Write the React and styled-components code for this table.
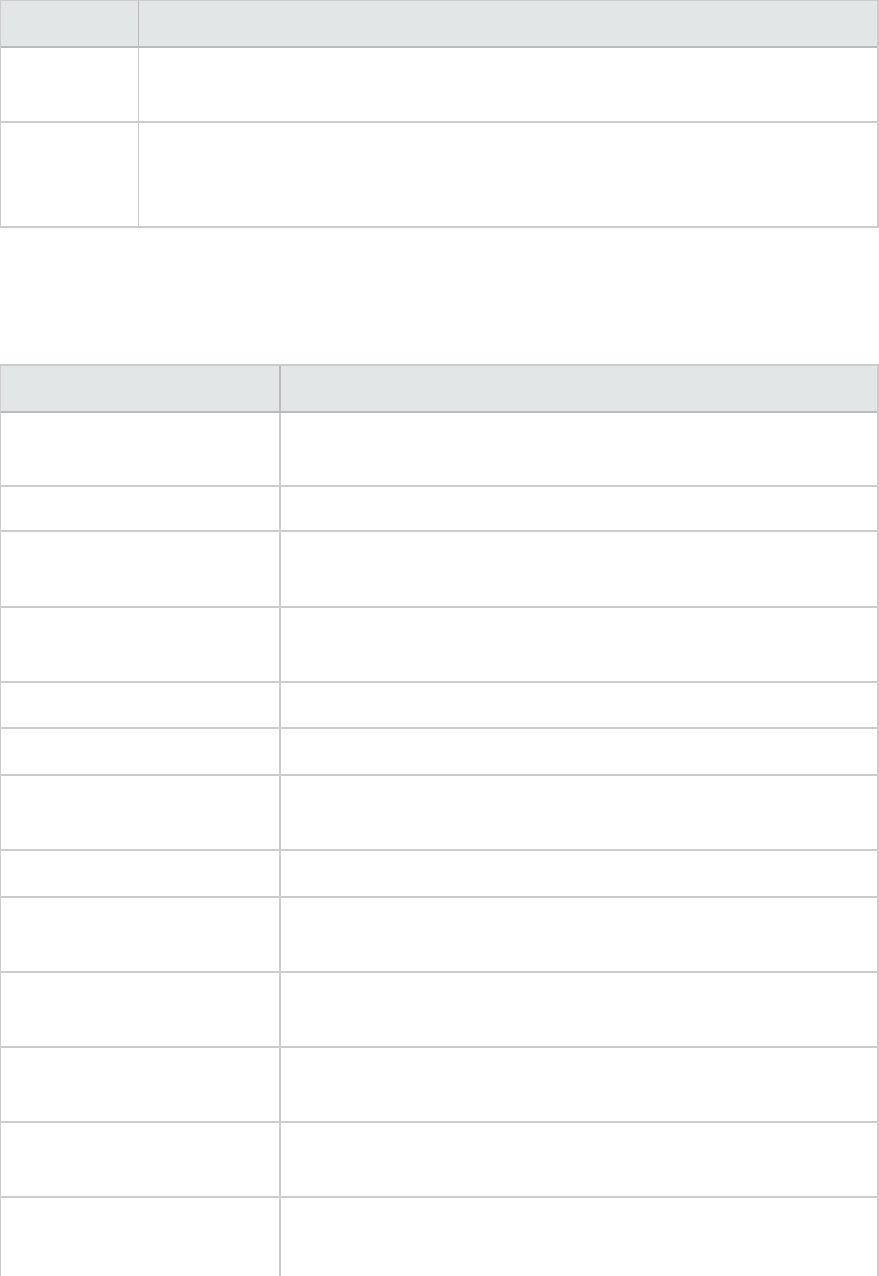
import React from 'react';
import styled, { createGlobalStyle } from 'styled-components';

const GlobalStyle = createGlobalStyle`
    body {
        margin: 0;
        background: #fff;
        font-family: "Liberation Sans", Arial, sans-serif;
        font-size: 14px;
        color: #333;
    }
`;

const smallRows = [73, 103];
const bigRows = [72, 43, 74, 73, 44, 45, 73, 45, 73, 73, 73, 73, 90];

function App() {
    return (
        <Page>
            <GlobalStyle />
            <Table $topBorder={1}>
                <colgroup>
                    <col style={{ width: 138 }} />
                    <col />
                </colgroup>
                <thead>
                    <tr>
                        <HeadCell $h={45} $divider={1}></HeadCell>
                        <HeadCell $h={45}></HeadCell>
                    </tr>
                </thead>
                <tbody>
                    {smallRows.map((h, i) => (
                        <tr key={i}>
                            <Cell $h={h} $divider={1}></Cell>
                            <Cell $h={h}></Cell>
                        </tr>
                    ))}
                </tbody>
            </Table>

            <Table $topBorder={2}>
                <colgroup>
                    <col style={{ width: 280 }} />
                    <col />
                </colgroup>
                <thead>
                    <tr>
                        <HeadCell $h={45} $divider={2}></HeadCell>
                        <HeadCell $h={45}></HeadCell>
                    </tr>
                </thead>
                <tbody>
                    {bigRows.map((h, i) => (
                        <tr key={i}>
                            <Cell $h={h} $divider={2}></Cell>
                            <Cell $h={h}></Cell>
                        </tr>
                    ))}
                </tbody>
            </Table>
        </Page>
    );
}

export default App;

const Page = styled.div`
    display: flex;
    flex-direction: column;
    gap: 136px;
`;

const Table = styled.table`
    width: 100%;
    table-layout: fixed;
    border-collapse: separate;
    border-spacing: 0;
    border-top: ${p => p.$topBorder}px solid #cccccc;
    border-left: 1px solid #cccccc;
    border-right: 2px solid #cccccc;
`;

const HeadCell = styled.th`
    height: ${p => p.$h}px;
    padding: 0;
    background: #e2e6e7;
    border-bottom: 2px solid #bbbbbb;
    border-right: ${p => (p.$divider ? `${p.$divider}px solid #bbbbbb` : 'none')};
    text-align: left;
`;

const Cell = styled.td`
    height: ${p => p.$h}px;
    padding: 0;
    background: #ffffff;
    border-bottom: 2px solid #cccccc;
    border-right: ${p => (p.$divider ? `${p.$divider}px solid #cccccc` : 'none')};
`;
